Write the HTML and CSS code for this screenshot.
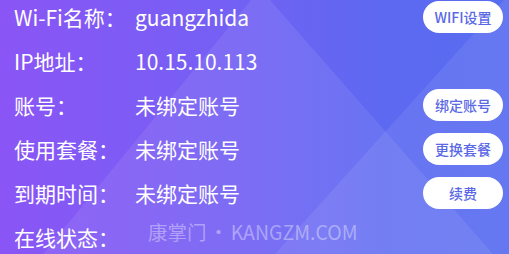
FILE: index.html
```html
<!DOCTYPE html>
<html lang="zh-CN">
<head>
    <meta charset="UTF-8">
    <title>网络信息</title>
    <link rel="stylesheet" href="styles.css">
</head>
<body>
    <div class="panel">
        <div class="shade shade_a"></div>
        <div class="shade shade_b"></div>

        <div class="rows">
            <div class="row">
                <span class="label">Wi-Fi名称：</span>
                <span class="value">guangzhida</span>
                <button class="pill" type="button">WIFI设置</button>
            </div>
            <div class="row">
                <span class="label">IP地址：</span>
                <span class="value">10.15.10.113</span>
            </div>
            <div class="row">
                <span class="label">账号：</span>
                <span class="value">未绑定账号</span>
                <button class="pill" type="button">绑定账号</button>
            </div>
            <div class="row">
                <span class="label">使用套餐：</span>
                <span class="value">未绑定账号</span>
                <button class="pill" type="button">更换套餐</button>
            </div>
            <div class="row">
                <span class="label">到期时间：</span>
                <span class="value">未绑定账号</span>
                <button class="pill" type="button">续费</button>
            </div>
            <div class="row">
                <span class="label">在线状态：</span>
                <span class="value"></span>
            </div>
        </div>

        <div class="watermark">康掌门 • KANGZM.COM</div>
    </div>
</body>
</html>
```

FILE: styles.css
```css
html, body {
    margin: 0;
    padding: 0;
}
body {
    font-family: "Noto Sans CJK SC", "Noto Sans", sans-serif;
    color: white;
}
.panel {
    position: relative;
    width: 509px;
    height: 254px;
    overflow: hidden;
    background: linear-gradient(90deg, #8b55f6 0%, #7460f4 45%, #5d69f1 75%, #586df0 100%);
}
/* decorative light triangles */
.shade {
    position: absolute;
    top: 0;
    left: 0;
    width: 509px;
    height: 254px;
    background: rgba(255, 255, 255, 0.08);
}
.shade_a {
    clip-path: polygon(43px 254px, 251px 0, 270px 0, 493px 254px);
}
.shade_b {
    clip-path: polygon(504px 0, 509px 0, 509px 254px, 275px 254px);
}
.rows {
    position: relative;
    margin-top: -5px;
    padding: 0 6px 0 14px;
}
.row {
    display: flex;
    align-items: center;
    height: 44px;
    font-size: 21px;
}
.label {
    width: 121px;
    flex: none;
}
.value {
    flex: 1;
}
.pill {
    width: 80px;
    height: 32px;
    border: none;
    border-radius: 16px;
    background: white;
    color: #5a68e6;
    font-family: "Noto Sans CJK SC", "Noto Sans", sans-serif;
    font-size: 14px;
    font-weight: 500;
    padding: 0;
}
.watermark {
    position: absolute;
    left: 148px;
    top: 219px;
    font-size: 19.5px;
    line-height: 26px;
    color: rgba(255, 255, 255, 0.38);
    white-space: nowrap;
    word-spacing: -2px;
}
```
